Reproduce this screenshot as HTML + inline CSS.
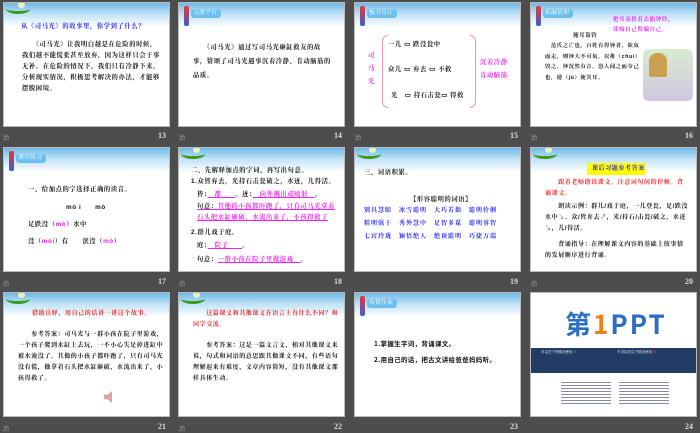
<!DOCTYPE html>
<html><head><meta charset="utf-8"><style>
*{margin:0;padding:0;box-sizing:border-box}
body{width:700px;height:431px;background:#4d4d4d;position:relative;overflow:hidden;font-family:"Liberation Sans","Noto Serif CJK SC","Noto Sans CJK SC",serif;}
.s{position:absolute;width:167px;height:125px;background:#fff;overflow:hidden;border:1px solid #bbb}
.hd{position:absolute;left:0;top:0;width:100%;height:24px;background:linear-gradient(#6fb9e6,#bfe2f6 45%,#fff)}
.vine{position:absolute;left:2px;top:1px;width:24px;height:10px;border-bottom:3px solid #3c9a1c;border-radius:0 0 50% 50%}
.vine:after{content:"";position:absolute;left:12px;top:-2px;width:7px;height:6px;background:#e8f0c8;border-radius:50%}
.pen{position:absolute;left:5px;top:3px;width:5px;height:20px;background:linear-gradient(#e33,#36c);border-radius:2px}
.tag{position:absolute;left:12px;top:6px;width:30px;height:9px;background:#6cc0f0;border-radius:3px;color:#fff;font-size:6px;line-height:9px;padding-left:2px}
.n{position:absolute;color:#ddd;font-size:8px;font-weight:bold;font-family:"Liberation Serif",serif}
.t{position:absolute;font-size:6.3px;line-height:11px;color:#111;font-weight:bold;letter-spacing:.6px}
.b{color:#22e}.r{color:#e22}.p{color:#e2e}
.ic{position:absolute;color:#bbb;font-size:6px}
</style></head><body>

<!-- row 1 -->
<div class="s" style="left:3px;top:2px"><div class="hd"></div><div class="vine"></div>
<div class="t b" style="left:17px;top:18px">从《司马光》的故事里，你学到了什么？</div>
<div class="t" style="left:18px;top:36px;width:140px">　　《司马光》让我明白越是在危险的时候，我们越不能慌张甚至放弃，因为这样只会于事无补。在危险的情况下，我们只有冷静下来，分析现实情况，积极思考解决的办法，才能够摆脱困境。</div></div>
<div class="s" style="left:178px;top:2px"><div class="hd"></div><div class="pen"></div><div class="tag">交流平台</div>
<div class="t" style="left:14px;top:38px;width:140px;line-height:14px">　　《司马光》通过写司马光砸缸救友的故事，赞颂了司马光遇事沉着冷静、肯动脑筋的品质。</div></div>
<div class="s" style="left:354px;top:2px"><div class="hd"></div><div class="pen"></div><div class="tag">板书设计</div>
<div class="t p" style="left:13px;top:46px;line-height:13px;width:8px">司马光</div>
<div style="position:absolute;left:27px;top:32px;width:6px;height:73px;border:1px solid #e9a;border-right:none;border-radius:6px 0 0 6px"></div>
<div class="t" style="left:33px;top:36px">一儿 ▭ 跌没瓮中</div>
<div class="t" style="left:33px;top:61px">众儿 ▭ 弃去 ▭ 不救</div>
<div class="t" style="left:36px;top:87px">光　▭ 持石击瓮▭ 得救</div>
<div style="position:absolute;left:115px;top:32px;width:6px;height:73px;border:1px solid #e9a;border-left:none;border-radius:0 6px 6px 0"></div>
<div class="t p" style="left:125px;top:53px;line-height:13px">沉着冷静<br>肯动脑筋</div></div>
<div class="s" style="left:530px;top:2px"><div class="hd"></div><div class="pen"></div><div class="tag">拓展延伸</div>
<div class="t p" style="left:82px;top:12px;font-size:5.5px;line-height:10px">把耳朵捂着去偷钟铃，<br>比喻自己欺骗自己。</div>
<div class="t" style="left:42px;top:28px;font-size:5.5px">掩耳盗铃</div>
<div class="t" style="left:14px;top:38px;width:95px;font-size:5.3px;line-height:10.5px">　范氏之亡也，百姓有得钟者，欲负而走，则钟大不可负。以椎（chuí）毁之，钟况然有音。恐人闻之而夺己也，遽（jù）掩其耳。</div>
<div style="position:absolute;left:112px;top:46px;width:50px;height:52px;background:linear-gradient(#d9ecd0,#cfc6e0);border-radius:6px"></div>
<div style="position:absolute;left:118px;top:50px;width:18px;height:24px;background:#c8a050;border-radius:8px 8px 2px 2px"></div></div>
<div class="n" style="left:158px;top:131px">13</div><div class="ic" style="left:3px;top:133px">冶</div>
<div class="n" style="left:334px;top:131px">14</div><div class="ic" style="left:179px;top:133px">冶</div>
<div class="n" style="left:510px;top:131px">15</div><div class="ic" style="left:355px;top:133px">冶</div>
<div class="n" style="left:685px;top:131px">16</div><div class="ic" style="left:531px;top:133px">冶</div>

<!-- row 2 -->
<div class="s" style="left:3px;top:147px"><div class="hd"></div><div class="pen"></div><div class="tag">课堂练习</div>
<div class="t" style="left:24px;top:36px">一、给加点的字选择正确的读音。</div>
<div class="t" style="left:62px;top:54px">mò i　　mò</div>
<div class="t" style="left:24px;top:71px">足跌没（<span class="p">mò</span>）水中</div>
<div class="t" style="left:24px;top:88px">没（<span class="p">mòi</span>）有　　泯没（<span class="p">mò</span>）</div></div>
<div class="s" style="left:178px;top:147px"><div class="hd"></div><div class="vine"></div>
<div class="t" style="left:12px;top:17px">二、先解释加点的字词，再写出句意。</div>
<div class="t" style="left:12px;top:28px">1.众皆弃去，光持石击瓮破之，水迸，儿得活。</div>
<div class="t" style="left:18px;top:41px">皆：<span class="p" style="text-decoration:underline">　都　　</span>。迸：<span class="p" style="text-decoration:underline">　向外溅出或喷射　</span>。</div>
<div class="t p" style="left:18px;top:53px;width:140px;text-decoration:underline"><span style="color:#222">句意：</span>其他的小孩都吓跑了，只有司马光拿着石头把水缸砸破，水流出来了，小孩得救了</div>
<div class="t" style="left:12px;top:79px">2.群儿戏于庭。</div>
<div class="t" style="left:18px;top:92px">庭：<span class="p" style="text-decoration:underline">　院子　　</span>。</div>
<div class="t" style="left:18px;top:106px">句意：<span class="p" style="text-decoration:underline">一群小孩在院子里做游戏　</span>。</div></div>
<div class="s" style="left:354px;top:147px"><div class="hd"></div><div class="vine"></div>
<div class="t" style="left:9px;top:19px">三、词语积累。</div>
<div class="t" style="left:55px;top:46px">【形容聪明的词语】</div>
<div class="t b" style="left:9px;top:57px;line-height:13px;word-spacing:14px;font-size:6px;letter-spacing:1px">别具慧眼　冰雪聪明　大巧若拙　聪明伶俐<br>精明强干　秀外慧中　足智多谋　聪明睿智<br>七窍玲珑　颖悟绝人　绝顶聪明　巧捷万端</div></div>
<div class="s" style="left:530px;top:147px"><div class="hd"></div><div class="vine"></div>
<div style="position:absolute;left:56px;top:15px;width:58px;height:12px;background:#ff0"></div>
<div class="t b" style="left:61px;top:16px;font-size:6px">课后习题参考答案</div>
<div class="t r" style="left:14px;top:30px;width:145px;font-size:6px">　　跟着老师朗读课文。注意词句间的停顿。背诵课文。</div>
<div class="t" style="left:14px;top:54px;width:145px;font-size:6px">　　朗读示例：群儿/戏于庭，一儿登瓮，足/跌没水中↘。众/皆弃去↗，光/持石/击瓮/破之，水迸↘，儿/得活。</div>
<div class="t" style="left:14px;top:92px;width:145px;font-size:6px">　　背诵指导：在理解课文内容的基础上按事情的发展顺序进行背诵。</div></div>
<div class="n" style="left:158px;top:277px">17</div><div class="ic" style="left:3px;top:279px">冶</div>
<div class="n" style="left:334px;top:277px">18</div><div class="ic" style="left:179px;top:279px">冶</div>
<div class="n" style="left:510px;top:277px">19</div>
<div class="n" style="left:685px;top:277px">20</div><div class="ic" style="left:531px;top:279px">冶</div>

<!-- row 3 -->
<div class="s" style="left:3px;top:292px"><div class="hd"></div><div class="vine"></div>
<div class="t r" style="left:28px;top:16px;font-size:6px">借助注释，用自己的话讲一讲这个故事。</div>
<div class="t" style="left:14px;top:37px;width:146px;font-size:6px">　　参考答案：司马光与一群小孩在院子里游戏，一个孩子爬到水缸上去玩，一不小心失足掉进缸中被水淹没了。其他的小孩子都吓跑了，只有司马光没有慌，他拿着石头把水缸砸破，水流出来了，小孩得救了。</div>
<div style="position:absolute;left:100px;top:98px;width:8px;height:12px;background:#d8a8a0;clip-path:polygon(0 30%,45% 30%,100% 0,100% 100%,45% 70%,0 70%)"></div></div>
<div class="s" style="left:178px;top:292px"><div class="hd"></div><div class="vine"></div>
<div class="t r" style="left:14px;top:16px;width:146px;font-size:6px">　　这篇课文和其他课文在语言上有什么不同？和同学交流。</div>
<div class="t" style="left:14px;top:48px;width:146px;font-size:6px">　　参考答案：这是一篇文言文，相对其他课文来说，句式和词语的意思跟其他课文不同，有些语句理解起来有难度，文章内容简短，没有其他课文那样具体生动。</div></div>
<div class="s" style="left:354px;top:292px"><div class="hd"></div><div class="pen"></div><div class="tag">布置作业</div>
<div class="t" style="left:19px;top:45px;font-family:'Noto Sans CJK SC',sans-serif;font-size:6.5px;letter-spacing:.3px">1.掌握生字词，背诵课文。</div>
<div class="t" style="left:19px;top:61px;font-family:'Noto Sans CJK SC',sans-serif;font-size:6.5px;letter-spacing:.3px">2.用自己的话，把古文讲给爸爸妈妈听。</div></div>
<div class="s" style="left:530px;top:292px">
<div style="position:absolute;left:34px;top:18px;font-size:26px;font-weight:bold;color:#2a6fc4;font-family:'Noto Sans CJK SC',sans-serif;line-height:26px;letter-spacing:2px">第<span style="color:#f08018">1</span>PPT</div>
<div style="position:absolute;left:0;top:55px;width:100%;height:25px;background:#233c66"></div>
<div style="position:absolute;left:10px;top:57px;color:#fff;font-size:3.5px">可以在下列情况使用 <span style="color:#6d3">✔</span></div>
<div style="position:absolute;left:86px;top:57px;color:#fff;font-size:3.5px">不可以在以下情况使用 <span style="color:#e33">✖</span></div>
<div style="position:absolute;left:30px;top:87px;width:50px;height:26px;background:repeating-linear-gradient(#fff 0 2px,#88a 2px 3px)"></div>
<div style="position:absolute;left:88px;top:87px;width:50px;height:26px;background:repeating-linear-gradient(#fff 0 2px,#88a 2px 3px)"></div></div>
<div class="n" style="left:158px;top:422px">21</div><div class="ic" style="left:3px;top:424px">冶</div>
<div class="n" style="left:334px;top:422px">22</div><div class="ic" style="left:179px;top:424px">冶</div>
<div class="n" style="left:510px;top:422px">23</div>
<div class="n" style="left:685px;top:422px">24</div>
</body></html>
